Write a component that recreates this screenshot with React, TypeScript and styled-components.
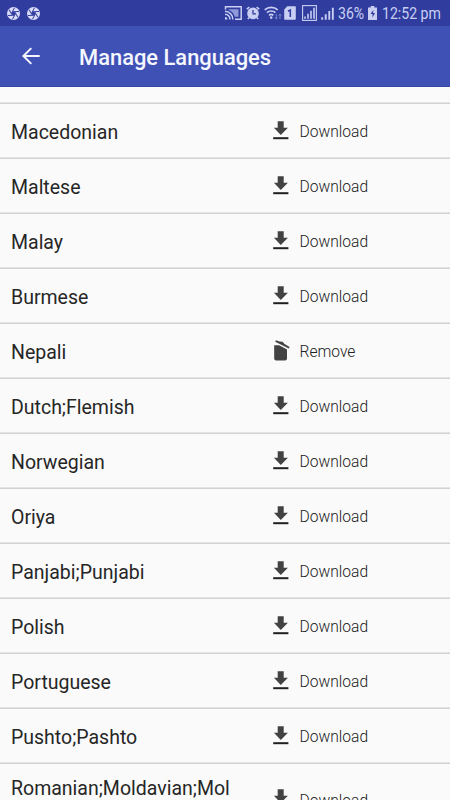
import React from "react";
import styled, { createGlobalStyle } from "styled-components";

const GlobalStyle = createGlobalStyle`
  html, body { margin: 0; padding: 0; height: 100%; overflow: hidden; }
  body { background: #fafafa; font-family: Roboto, "Liberation Sans", sans-serif; }
  *, *::before, *::after { box-sizing: border-box; }
  svg { display: block; flex: none; }
`;

const Screen = styled.div`
  width: 100%;
  height: 100vh;
  display: flex;
  flex-direction: column;
  overflow: hidden;
  background: #fafafa;
`;

const StatusBar = styled.div`
  flex: none;
  height: 26px;
  display: flex;
  align-items: center;
  justify-content: space-between;
  padding: 0 9px 0 7px;
  background: #303d9f;
  color: #c9cff3;
`;

const Notifications = styled.div`
  display: flex;
  gap: 7px;
`;

const Indicators = styled.div`
  display: flex;
  align-items: center;
`;

const Indicator = styled.span<{ $gap: number }>`
  display: block;
  margin-right: ${(p) => p.$gap}px;
`;

const StatusText = styled.span<{ $width: number; $gap?: number }>`
  width: ${(p) => p.$width}px;
  margin-right: ${(p) => p.$gap ?? 0}px;
  padding-top: 2px;
  font-size: 16px;
  line-height: 24px;
  white-space: nowrap;
  transform: scaleX(0.88);
  transform-origin: left;
`;

const Toolbar = styled.header`
  flex: none;
  height: 61px;
  display: flex;
  align-items: center;
  padding-left: 22px;
  background: #3f51b5;
  border-bottom: 1px solid #3948a4;
  color: #f5f7ff;
`;

const BackButton = styled.button`
  display: flex;
  padding: 0;
  border: 0;
  background: none;
  color: inherit;
`;

const Title = styled.h1`
  margin: 3px 0 0 39px;
  font-size: 21.9px;
  line-height: 28px;
  font-weight: 500;
  white-space: nowrap;
`;

const List = styled.ul`
  flex: none;
  margin: 0;
  padding: 15px 0 0;
  list-style: none;
`;

const Row = styled.li<{ $tall?: boolean }>`
  height: ${(p) => (p.$tall ? 72 : 55)}px;
  display: flex;
  align-items: center;
  padding: 3px 0 0 11px;
  border-top: 1px solid #e4e4e4;
  box-shadow: inset 0 1px #d2d2d2;
`;

const Name = styled.span`
  width: 225px;
  margin-right: 37px;
  padding-top: 2px;
  color: #262626;
  font-size: 19.5px;
  line-height: 24px;
  overflow-wrap: anywhere;
`;

const Action = styled.button`
  display: flex;
  align-items: center;
  gap: 10.5px;
  padding: 0;
  border: 0;
  background: none;
  color: #202020;
  font-family: inherit;
  font-size: 15.6px;
  font-weight: 300;
  line-height: 22px;
`;

const ActionIcon = styled.span`
  width: 16px;
  margin-top: -3px;
`;

const ActionLabel = styled.span`
  padding-top: 1px;
`;

const Aperture = () => (
  <svg width="13" height="13" viewBox="0 0 26 26">
    <circle cx="13" cy="13" r="13" fill="#d9dcf8" />
    <circle cx="13" cy="13" r="3.5" fill="#303d9f" />
    {[0, 60, 120, 180, 240, 300].map((a) => (
      <path key={a} d="M9.5 12 15 1.5" transform={`rotate(${a} 13 13)`} stroke="#303d9f" strokeWidth="2" />
    ))}
  </svg>
);

const Cast = () => (
  <svg width="18" height="14" viewBox="0 0 18 14" fill="none" stroke="currentColor" strokeWidth="1.5">
    <path d="M4.5 3.3h10v7.4h-3.7A10 10 0 0 0 4.5 4Z" fill="#8f98d8" stroke="none" />
    <path d="M1.5 3.5V.8h15.7v12.4H11M1 5.2a8 8 0 0 1 7.8 8.3M1 8.2a5 5 0 0 1 5 5.3" />
    <path d="M1 11v2.5h2.4A2.4 2.4 0 0 0 1 11Z" fill="currentColor" stroke="none" />
  </svg>
);

const Alarm = () => (
  <svg width="14" height="14" viewBox="0 0 14 14" fill="none">
    <circle cx="7" cy="7.4" r="5.8" fill="currentColor" />
    <path d="M.8 3.2 3.4 1M13.2 3.2 10.6 1M3.2 11.5 1.8 13M10.8 11.5l1.4 1.5" stroke="currentColor" strokeWidth="1.6" />
    <path d="M7 4v3.8h3" stroke="#303d9f" strokeWidth="1.3" />
  </svg>
);

const Wifi = () => (
  <svg width="18" height="14" viewBox="0 0 18 14" fill="none" stroke="currentColor" strokeWidth="1.7">
    <path d="M.7 3.9a9.6 9.6 0 0 1 13 0M3 6.7a6 6 0 0 1 8.4 0M5.1 9.4a3.2 3.2 0 0 1 4.2 0" />
    <circle cx="7.2" cy="11.6" r="1.3" fill="currentColor" stroke="none" />
    <path d="M12.3 8v5M10.9 11.5l1.4 1.6 1.4-1.6M16 13V8M14.6 9.6 16 8l1.4 1.6" stroke="#7983cb" strokeWidth="1" />
  </svg>
);

const SimCard = () => (
  <svg width="12" height="14" viewBox="0 0 12 14">
    <path d="M3.3.3H11q.8 0 .8.8v11.8q0 .8-.8.8H1q-.8 0-.8-.8V3.5Z" fill="currentColor" />
    <path d="M4 5.2 6.3 4v7" fill="none" stroke="#303d9f" strokeWidth="1.6" />
  </svg>
);

const Bars = () => <path d="M1 12.5v-2.3M4 12.5V7.6M7 12.5V4.6M10 12.5V1.5" stroke="currentColor" strokeWidth="1.6" />;

const BoxedSignal = () => (
  <svg width="15" height="16" viewBox="0 0 15 16">
    <rect x=".6" y=".6" width="13.8" height="14.8" fill="none" stroke="currentColor" strokeWidth="1.1" />
    <g transform="translate(2 1.2)"><Bars /></g>
  </svg>
);

const Signal = () => (
  <svg width="13" height="14" viewBox="0 0 11 12.8" preserveAspectRatio="none"><Bars /></svg>
);

const Battery = () => (
  <svg width="9" height="14" viewBox="0 0 9 14">
    <path d="M2.7 0h3.6v1.5H9V14H0V1.5h2.7Z" fill="currentColor" />
    <path d="M5.5 3.8 2.5 8h2v3.5L7 7H5Z" fill="#303d9f" />
  </svg>
);

const BackArrow = () => (
  <svg width="18" height="18" viewBox="0 0 18 18" fill="none" stroke="currentColor" strokeWidth="2">
    <path d="M17.7 9H1.5M9.3 1.1 1.4 9l7.9 7.9" />
  </svg>
);

const DownloadIcon = () => (
  <svg width="16" height="19" viewBox="0 0 16 19">
    <path d="M4.7.2h6v6.5h4.2L7.8 14 .9 6.7h3.8Z" fill="#424242" />
    <path d="M.2 16.2h15.2v2H.2Z" fill="#202020" />
  </svg>
);

const TrashIcon = () => (
  <svg width="17" height="21" viewBox="0 0 17 21" fill="#424242">
    <path d="M1.2 5.3h5L14 9.6v8.9q0 2-2 2H3.2q-2 0-2-2Z" />
    <path d="m3 .2 3.5 1.4 3 .1 2.1 2.2 5 3.1-.8 1.5L2.2 1.7Z" />
  </svg>
);

type Language = { name: string; installed?: boolean; tall?: boolean };

const languages: Language[] = [
  { name: "Macedonian" },
  { name: "Maltese" },
  { name: "Malay" },
  { name: "Burmese" },
  { name: "Nepali", installed: true },
  { name: "Dutch;Flemish" },
  { name: "Norwegian" },
  { name: "Oriya" },
  { name: "Panjabi;Punjabi" },
  { name: "Polish" },
  { name: "Portuguese" },
  { name: "Pushto;Pashto" },
  { name: "Romanian;Moldavian;Moldovan", tall: true },
];

export default function App() {
  return (
    <Screen>
      <GlobalStyle />
      <StatusBar>
        <Notifications>
          <Aperture />
          <Aperture />
        </Notifications>
        <Indicators>
          <Indicator $gap={4}><Cast /></Indicator>
          <Indicator $gap={4}><Alarm /></Indicator>
          <Indicator $gap={2}><Wifi /></Indicator>
          <Indicator $gap={6}><SimCard /></Indicator>
          <Indicator $gap={4}><BoxedSignal /></Indicator>
          <Indicator $gap={4}><Signal /></Indicator>
          <StatusText $width={26} $gap={4}>36%</StatusText>
          <Indicator $gap={5}><Battery /></Indicator>
          <StatusText $width={59}>12:52 pm</StatusText>
        </Indicators>
      </StatusBar>
      <Toolbar>
        <BackButton aria-label="Back"><BackArrow /></BackButton>
        <Title>Manage Languages</Title>
      </Toolbar>
      <List>
        {languages.map((l) => (
          <Row key={l.name} $tall={l.tall}>
            <Name>{l.name}</Name>
            <Action>
              <ActionIcon>{l.installed ? <TrashIcon /> : <DownloadIcon />}</ActionIcon>
              <ActionLabel>{l.installed ? "Remove" : "Download"}</ActionLabel>
            </Action>
          </Row>
        ))}
      </List>
    </Screen>
  );
}
